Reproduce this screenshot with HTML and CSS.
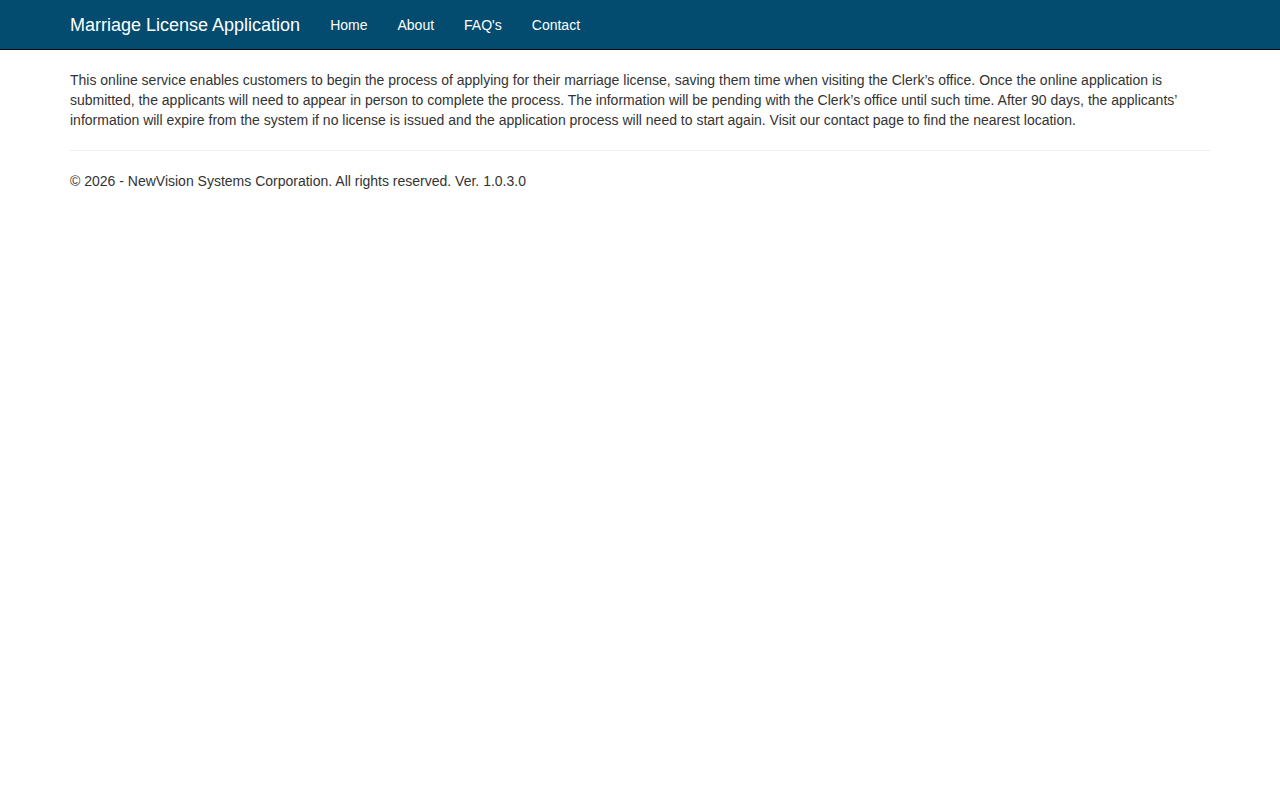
FILE: index.html
```html
<!DOCTYPE html>
<html>
    <head>
        <meta charset="utf-8">
        <title>Marriage License Application</title>
        <link rel="stylesheet" href="styles.css">
    </head>
    <body>
        <div class="navbar">
            <div class="container nav-inner">
                <a class="brand" href="#">Marriage License Application</a>
                <ul class="nav">
                    <li><a href="#">Home</a></li>
                    <li><a href="#">About</a></li>
                    <li><a href="#">FAQ's</a></li>
                    <li><a href="#">Contact</a></li>
                </ul>
            </div>
        </div>
        <div class="container body-content">
            <p>This online service enables customers to begin the process of applying for their marriage license, saving them time when visiting the Clerk’s office. Once the online application is submitted, the applicants will need to appear in person to complete the process. The information will be pending with the Clerk’s office until such time. After 90 days, the applicants’ information will expire from the system if no license is issued and the application process will need to start again. Visit our contact page to find the nearest location.</p>
            <hr>
            <footer>
                <p>&copy; 2026 - NewVision Systems Corporation. All rights reserved. Ver. 1.0.3.0</p>
            </footer>
        </div>
    </body>
</html>
```

FILE: styles.css
```css
body {
    margin: 0;
    font-family: "Liberation Sans", Arial, sans-serif;
    font-size: 14px;
    line-height: 20px;
    color: #333;
    background: #fff;
}

.container {
    width: 1140px;
    margin: 0 auto;
    padding: 0 15px;
}

.navbar {
    height: 49px;
    background-color: #034c6f;
    border-bottom: 1px solid #080808;
}

.nav-inner {
    display: flex;
    align-items: center;
    height: 49px;
}

.brand {
    font-size: 18px;
    color: #fff;
    text-decoration: none;
    padding-right: 15px;
}

.nav {
    display: flex;
    list-style: none;
    margin: 0;
    padding: 0;
}

.nav a {
    display: block;
    padding: 0 15px;
    font-size: 14px;
    color: #fff;
    text-decoration: none;
}

.body-content {
    padding-top: 20px;
}

.body-content p {
    margin: 0 0 10px;
}

hr {
    margin: 20px 0;
    border: 0;
    border-top: 1px solid #eee;
}
```
